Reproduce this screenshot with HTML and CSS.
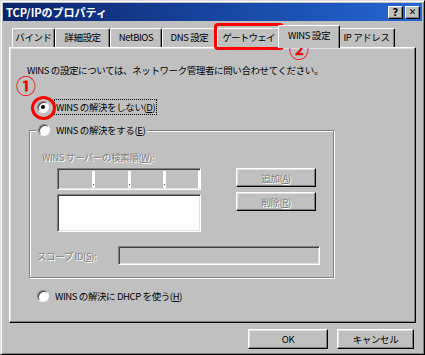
FILE: index.html
```html
<!DOCTYPE html>
<html lang="ja">
<head>
  <meta charset="UTF-8">
  <title>TCP/IPのプロパティ</title>
  <link rel="stylesheet" href="styles.css">
</head>
<body>
  <div class="window">
    <div class="titlebar">
      <span class="title">TCP/IPのプロパティ</span>
      <span class="tbtn">?</span>
      <span class="tbtn close">✕</span>
    </div>
    <div class="main">
      <div class="tabs">
        <div class="tab t-bind">バインド</div>
        <div class="tab t-adv">詳細設定</div>
        <div class="tab t-netbios">NetBIOS</div>
        <div class="tab t-dns">DNS 設定</div>
        <div class="tab t-gw">ゲートウェイ</div>
        <div class="tab active">WINS 設定</div>
        <div class="tab t-ip">IP アドレス</div>
      </div>
      <div class="panel">
        <p class="intro">WINS の設定については、ネットワーク管理者に問い合わせてください。</p>
        <div class="radio first">
          <span class="dot checked"></span>
          <span class="focus">WINS の解決をしない(<u>D</u>)</span>
        </div>
        <fieldset class="group">
          <legend>
            <span class="radio"><span class="dot"></span><span>WINS の解決をする(<u>E</u>)</span></span>
          </legend>
          <div class="disabled label-servers">WINS サーバーの検索順(<u>W</u>):</div>
          <div class="servers">
            <div class="fields">
              <div class="ipbox">
                <span class="seg"></span><span class="sep"></span>
                <span class="seg"></span><span class="sep"></span>
                <span class="seg"></span><span class="sep"></span>
                <span class="seg"></span><span class="sep last"></span>
              </div>
              <div class="listbox"></div>
            </div>
            <div class="side">
              <div class="btn disabled">追加(<u>A</u>)</div>
              <div class="btn disabled">削除(<u>R</u>)</div>
            </div>
          </div>
          <div class="scope">
            <span class="disabled">スコープ ID(<u>S</u>):</span>
            <span class="scopebox"></span>
          </div>
        </fieldset>
        <div class="radio last">
          <span class="dot"></span>
          <span>WINS の解決に DHCP を使う(<u>H</u>)</span>
        </div>
      </div>
      <div class="footer">
        <div class="btn ok">OK</div>
        <div class="btn cancel">キャンセル</div>
      </div>
    </div>

    <!-- red marks drawn over the screenshot -->
    <div class="mark mark-tab"></div>
    <div class="mark mark-radio"></div>
    <span class="num num1">①</span>
    <span class="num num2">②</span>
  </div>
</body>
</html>
```

FILE: styles.css
```css
* { box-sizing: border-box; }
body { margin: 0; background: #c0c0c0; font-family: "Noto Sans CJK JP", sans-serif; font-size: 9.5px; letter-spacing: -0.4px; color: #000; }

.window { position: relative; width: 425px; height: 355px; background: #c0c0c0; border: 1px solid; border-color: #dfdfdf #000 #000 #dfdfdf; box-shadow: inset 1px 1px 0 #fff, inset -1px -1px 0 #808080; padding: 2px; }

.titlebar { display: flex; align-items: center; height: 18px; background: linear-gradient(to right, #0a246a, #2466d4); color: #fff; padding: 0 2px 0 3px; }
.title { flex: 1; font-weight: bold; font-size: 11px; letter-spacing: 0; }
.tbtn { width: 15px; height: 13px; margin-left: 2px; background: #c0c0c0; color: #000; font: bold 10px/11px "DejaVu Sans", sans-serif; letter-spacing: 0; text-align: center; border: 1px solid; border-color: #fff #000 #000 #fff; box-shadow: inset -1px -1px 0 #808080; }
.close { font-size: 9px; }

.main { padding: 4px 6px 0 6px; }

.tabs { display: flex; align-items: flex-end; padding-left: 3px; height: 22px; }
.tab { height: 19px; line-height: 17px; text-align: center; border: 1px solid; border-bottom: 0; border-color: #fff #000 #000 #fff; box-shadow: inset -1px 0 0 #808080; border-radius: 2px 2px 0 0; white-space: nowrap; }
.t-bind { width: 43px; }
.t-adv { width: 55px; }
.t-netbios { width: 52px; }
.t-dns { width: 55px; }
.t-gw { width: 63px; letter-spacing: -0.8px; }
.t-ip { width: 57px; }
.tab.active { position: relative; z-index: 1; width: 62px; height: 23px; margin: 0 -2px -1px; background: #c0c0c0; line-height: 19px; }

.panel { height: 276px; border: 1px solid; border-color: #fff #000 #000 #fff; box-shadow: inset -1px -1px 0 #808080, inset 1px 1px 0 #dfdfdf; padding: 15px 0 0 17px; }
.intro { margin: 0; line-height: 14px; }

.radio { display: flex; align-items: center; gap: 6px; line-height: 14px; }
.radio.first { margin: 23px 0 0 10px; }
.radio.last { margin: 11px 0 0 10px; }
.dot { position: relative; width: 12px; height: 12px; border-radius: 50%; background: #fff; border: 1px solid; border-color: #808080 #fff #fff #808080; box-shadow: inset 1px 1px 0 #404040; }
.dot.checked::after { content: ""; position: absolute; left: 3px; top: 3px; width: 4px; height: 4px; border-radius: 50%; background: #000; }
.focus { outline: 1px dotted #000; padding: 0 1px; }

.group { margin: 9px 0 0 2px; width: 305px; padding: 0 0 12px 0; border: 1px solid #808080; box-shadow: 1px 1px 0 #fff, inset 1px 1px 0 #fff; }
.group legend { margin-left: 6px; padding: 0 2px; background: #c0c0c0; }

.disabled { color: #808080; text-shadow: 1px 1px 0 #fff; }
.label-servers { margin: 13px 0 0 12px; line-height: 14px; }

.servers { display: flex; margin: 4px 0 0 27px; }
.fields { width: 144px; }
.ipbox { display: flex; height: 22px; border: 1px solid; border-color: #808080 #fff #fff #808080; box-shadow: inset 1px 1px 0 #404040, inset -1px -1px 0 #dfdfdf; padding: 2px 0 1px 2px; }
.seg { flex: 1; }
.sep { position: relative; width: 3px; background: #fff; }
.sep::after { content: ""; position: absolute; left: 1px; bottom: 3px; width: 1px; height: 1px; background: #404040; }
.sep.last { width: 2px; }
.sep.last::after { display: none; }
.listbox { height: 38px; margin-top: 4px; background: #fff; border: 1px solid; border-color: #808080 #fff #fff #808080; box-shadow: inset 1px 1px 0 #404040, inset -1px -1px 0 #dfdfdf; }
.side { display: flex; flex-direction: column; gap: 5px; margin-left: 35px; }

.btn { display: flex; align-items: center; justify-content: center; width: 80px; height: 19px; background: #c0c0c0; border: 1px solid; border-color: #fff #000 #000 #fff; box-shadow: inset -1px -1px 0 #808080, inset 1px 1px 0 #dfdfdf; }

.scope { display: flex; align-items: center; margin: 14px 0 0 7px; }
.scope .disabled { width: 81px; }
.scopebox { width: 202px; height: 19px; border: 1px solid; border-color: #808080 #fff #fff #808080; box-shadow: inset 1px 1px 0 #404040, inset -1px -1px 0 #dfdfdf; }

.footer { display: flex; justify-content: flex-end; gap: 9px; margin-top: 6px; padding-right: 2px; }
.footer .btn { height: 20px; }
.cancel { width: 77px; }

.mark { position: absolute; border: 3px solid #f00; }
.mark-tab { left: 213px; top: 22px; width: 70px; height: 27px; border-radius: 4px; }
.mark-radio { left: 30px; top: 95px; width: 25px; height: 24px; border-radius: 50%; }
.num { position: absolute; color: #e00; font: bold 20px/16px "Noto Sans CJK JP", serif; letter-spacing: 0; }
.num1 { left: 15px; top: 77px; }
.num2 { left: 288px; top: 41px; }
```
